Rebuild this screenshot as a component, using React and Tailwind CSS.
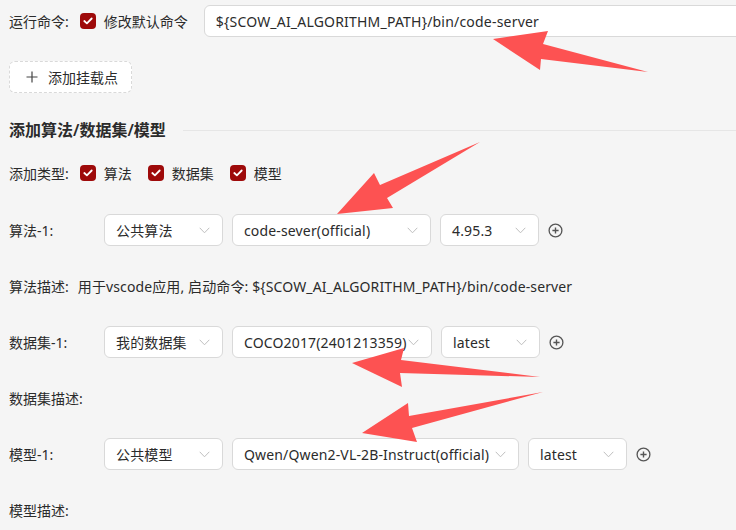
import React from "react";

const font = { fontFamily: '"Noto Sans", "Noto Sans CJK SC", sans-serif' };

function Check() {
  return (
    <span className="w-[16px] h-[16px] rounded-[4px] bg-[#9e0a0a] flex items-center justify-center shrink-0">
      <svg width="10" height="8" viewBox="0 0 10 8">
        <path d="M1.3 4 L3.9 6.4 L8.7 1.5" fill="none" stroke="#fff" strokeWidth="1.8" strokeLinecap="round" strokeLinejoin="round" />
      </svg>
    </span>
  );
}

function Chevron() {
  return (
    <svg width="11" height="7" viewBox="0 0 11 7" className="shrink-0">
      <path d="M0.7 0.8 L5.5 5.8 L10.3 0.8" fill="none" stroke="#bfbfbf" strokeWidth="1" />
    </svg>
  );
}

function PlusCircle() {
  return (
    <svg width="15" height="15" viewBox="0 0 15 15" className="shrink-0">
      <circle cx="7.5" cy="7.5" r="6.4" fill="none" stroke="#555" strokeWidth="1.3" />
      <path d="M7.5 4.4 V10.6 M4.4 7.5 H10.6" stroke="#555" strokeWidth="1.4" />
    </svg>
  );
}

function Select({ value, w }) {
  return (
    <div className={`${w} h-[32px] bg-white border border-[#d9d9d9] rounded-[6px] flex items-center justify-between pl-[11px] pr-[12px] shrink-0`}>
      <span className="text-[14px] text-[#2b2b2b] whitespace-nowrap tracking-[0.15px]">{value}</span>
      <Chevron />
    </div>
  );
}

function SelectRow({ label, a, b, c, bw }) {
  return (
    <div className="flex items-center h-[32px] mt-[24px]">
      <div className="w-[95px] text-[14px] text-[#2b2b2b] shrink-0">{label}</div>
      <div className="flex items-center gap-[9px]">
        <Select value={a} w="w-[119px]" />
        <Select value={b} w={bw} />
        <Select value={c} w="w-[99px]" />
        <PlusCircle />
      </div>
    </div>
  );
}

export default function App() {
  return (
    <div className="relative w-[736px] h-[530px] bg-[#f5f5f5] overflow-hidden text-[#2b2b2b]" style={font}>
      <div className="flex flex-col pl-[9px]">
        {/* Row 1 */}
        <div className="flex items-center h-[32px] mt-[5px]">
          <span className="text-[14px] whitespace-nowrap">运行命令:</span>
          <span className="ml-[11px]"><Check /></span>
          <span className="ml-[8px] text-[14px] whitespace-nowrap">修改默认命令</span>
          <div className="ml-[16px] w-[620px] h-[32px] shrink-0 bg-white border border-[#d9d9d9] rounded-[6px] flex items-center px-[11px]">
            <span className="text-[14px] whitespace-nowrap tracking-[0.2px]">{"${SCOW_AI_ALGORITHM_PATH}/bin/code-server"}</span>
          </div>
        </div>

        {/* add mount button */}
        <div className="mt-[24px]">
          <div className="w-[123px] h-[32px] bg-white border border-dashed border-[#d9d9d9] rounded-[6px] flex items-center pl-[16px] gap-[10px]">
            <svg width="12" height="12" viewBox="0 0 12 12">
              <path d="M6 0.5 V11.5 M0.5 6 H11.5" stroke="#444" strokeWidth="1.2" />
            </svg>
            <span className="text-[14px]">添加挂载点</span>
          </div>
        </div>

        {/* heading */}
        <div className="flex items-center h-[22px] mt-[26px]">
          <span className="text-[16px] font-semibold whitespace-nowrap">添加算法/数据集/模型</span>
          <div className="ml-[17px] flex-1 h-[1px] bg-[#e6e6e6]" />
        </div>

        {/* types */}
        <div className="flex items-center h-[22px] mt-[21px]">
          <span className="text-[14px] whitespace-nowrap">添加类型:</span>
          <span className="ml-[11px]"><Check /></span>
          <span className="ml-[8px] text-[14px]">算法</span>
          <span className="ml-[16px]"><Check /></span>
          <span className="ml-[8px] text-[14px]">数据集</span>
          <span className="ml-[16px]"><Check /></span>
          <span className="ml-[8px] text-[14px]">模型</span>
        </div>

        <div className="mt-[6px]" />
        <SelectRow label="算法-1:" a="公共算法" b="code-sever(official)" c="4.95.3" bw="w-[199px]" />
        <div className="flex items-center h-[32px] mt-[24px] text-[14px] whitespace-nowrap">
          <span>算法描述:</span>
          <span className="ml-[9px] tracking-[0.12px]">用于vscode应用, 启动命令: {"${SCOW_AI_ALGORITHM_PATH}/bin/code-server"}</span>
        </div>
        <SelectRow label="数据集-1:" a="我的数据集" b="COCO2017(2401213359)" c="latest" bw="w-[200px]" />
        <div className="flex items-center h-[32px] mt-[24px] text-[14px]">数据集描述:</div>
        <SelectRow label="模型-1:" a="公共模型" b="Qwen/Qwen2-VL-2B-Instruct(official)" c="latest" bw="w-[287px]" />
        <div className="flex items-center h-[32px] mt-[24px] text-[14px]">模型描述:</div>
      </div>

      {/* annotation arrows */}
      <svg className="absolute inset-0 pointer-events-none" width="736" height="530" viewBox="0 0 736 530">
        <g fill="#fd5252">
          <polygon points="493,39 548,31 543,44 648,72 541,59 540,70" />
          <polygon points="337,214 374,173 380,185 480,142 387,198 393,208" />
          <polygon points="352,363 404,348 401,360 540,377 400,373 402,387" />
          <polygon points="362,433 408,403 409,416 543,392 412,428 417,442" />
        </g>
      </svg>
    </div>
  );
}
